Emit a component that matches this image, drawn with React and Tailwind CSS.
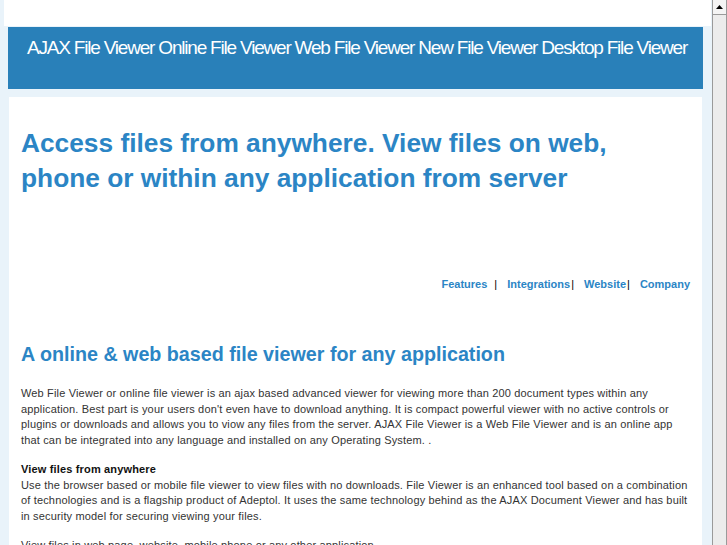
export default function App() {
  const font = { fontFamily: '"Liberation Sans", Arial, Helvetica, sans-serif' };
  const Line = ({ children }) => <span className="block whitespace-nowrap">{children}</span>;
  return (
    <div className="flex h-[545px] w-[727px] overflow-hidden bg-[#e9f3fa]" style={font}>
      <div className="w-[712px] shrink-0">
        <div className="ml-[4px] h-[26px] w-[707px] bg-white" />
        <div className="ml-[8px] mt-[1px] h-[62px] w-[695px] bg-[#2980b9] pl-[19px] pt-[10px]">
          <div className="whitespace-nowrap text-[19px] leading-[22px] tracking-[-1.2px] text-white">
            AJAX File Viewer Online File Viewer Web File Viewer New File Viewer Desktop File Viewer
          </div>
        </div>
        <div className="ml-[9px] mt-[8px] w-[693px] bg-white px-[12px] pt-[29px] pb-[40px]">
          <h1 className="text-[26.3px] font-bold leading-[35px] text-[#2b85c5]">
            Access files from anywhere. View files on web,
            <br />
            phone or within any application from server
          </h1>
          <div className="mt-[81px] flex justify-end text-[11px] leading-[15px]">
            <a className="font-bold text-[#2b85c5]">Features</a>
            <span className="ml-[7px] text-black">|</span>
            <a className="ml-[10px] font-bold text-[#2b85c5]">Integrations</a>
            <span className="ml-[1px] text-black">|</span>
            <a className="ml-[10px] font-bold text-[#2b85c5]">Website</a>
            <span className="ml-[1px] text-black">|</span>
            <a className="ml-[10px] font-bold text-[#2b85c5]">Company</a>
          </div>
          <h2 className="mt-[50px] text-[19.7px] font-bold leading-[24px] text-[#2b85c5]">
            A online &amp; web based file viewer for any application
          </h2>
          <div className="mt-[20px] text-[11px] leading-[15.5px] tracking-[0.16px] text-[#333]">
            <p>
              <Line>Web File Viewer or online file viewer is an ajax based advanced viewer for viewing more than 200 document types within any</Line>
              <Line>application. Best part is your users don't even have to download anything. It is compact powerful viewer with no active controls or</Line>
              <Line>plugins or downloads and allows you to viow any files from the server. AJAX File Viewer is a Web File Viewer and is an online app</Line>
              <Line>that can be integrated into any language and installed on any Operating System. .</Line>
            </p>
            <p className="mt-[14px]">
              <Line>
                <b className="text-[#111]">View files from anywhere</b>
              </Line>
              <Line>Use the browser based or mobile file viewer to view files with no downloads. File Viewer is an enhanced tool based on a combination</Line>
              <Line>of technologies and is a flagship product of Adeptol. It uses the same technology behind as the AJAX Document Viewer and has built</Line>
              <Line>in security model for securing viewing your files.</Line>
            </p>
            <p className="mt-[14px]">
              <Line>View files in web page, website, mobile phone or any other application</Line>
            </p>
          </div>
        </div>
      </div>
      <div className="flex h-[545px] w-[15px] shrink-0 flex-col border-l border-r border-[#9a9a9a] bg-[#ececec]">
        <div className="flex h-[15px] items-center justify-center border-b border-[#9a9a9a] bg-[#f4f4f4]">
          <svg width="7" height="4" viewBox="0 0 7 4">
            <path d="M0 4 L3.5 0 L7 4 Z" fill="#000" />
          </svg>
        </div>
        <div className="flex-1" />
      </div>
    </div>
  );
}
